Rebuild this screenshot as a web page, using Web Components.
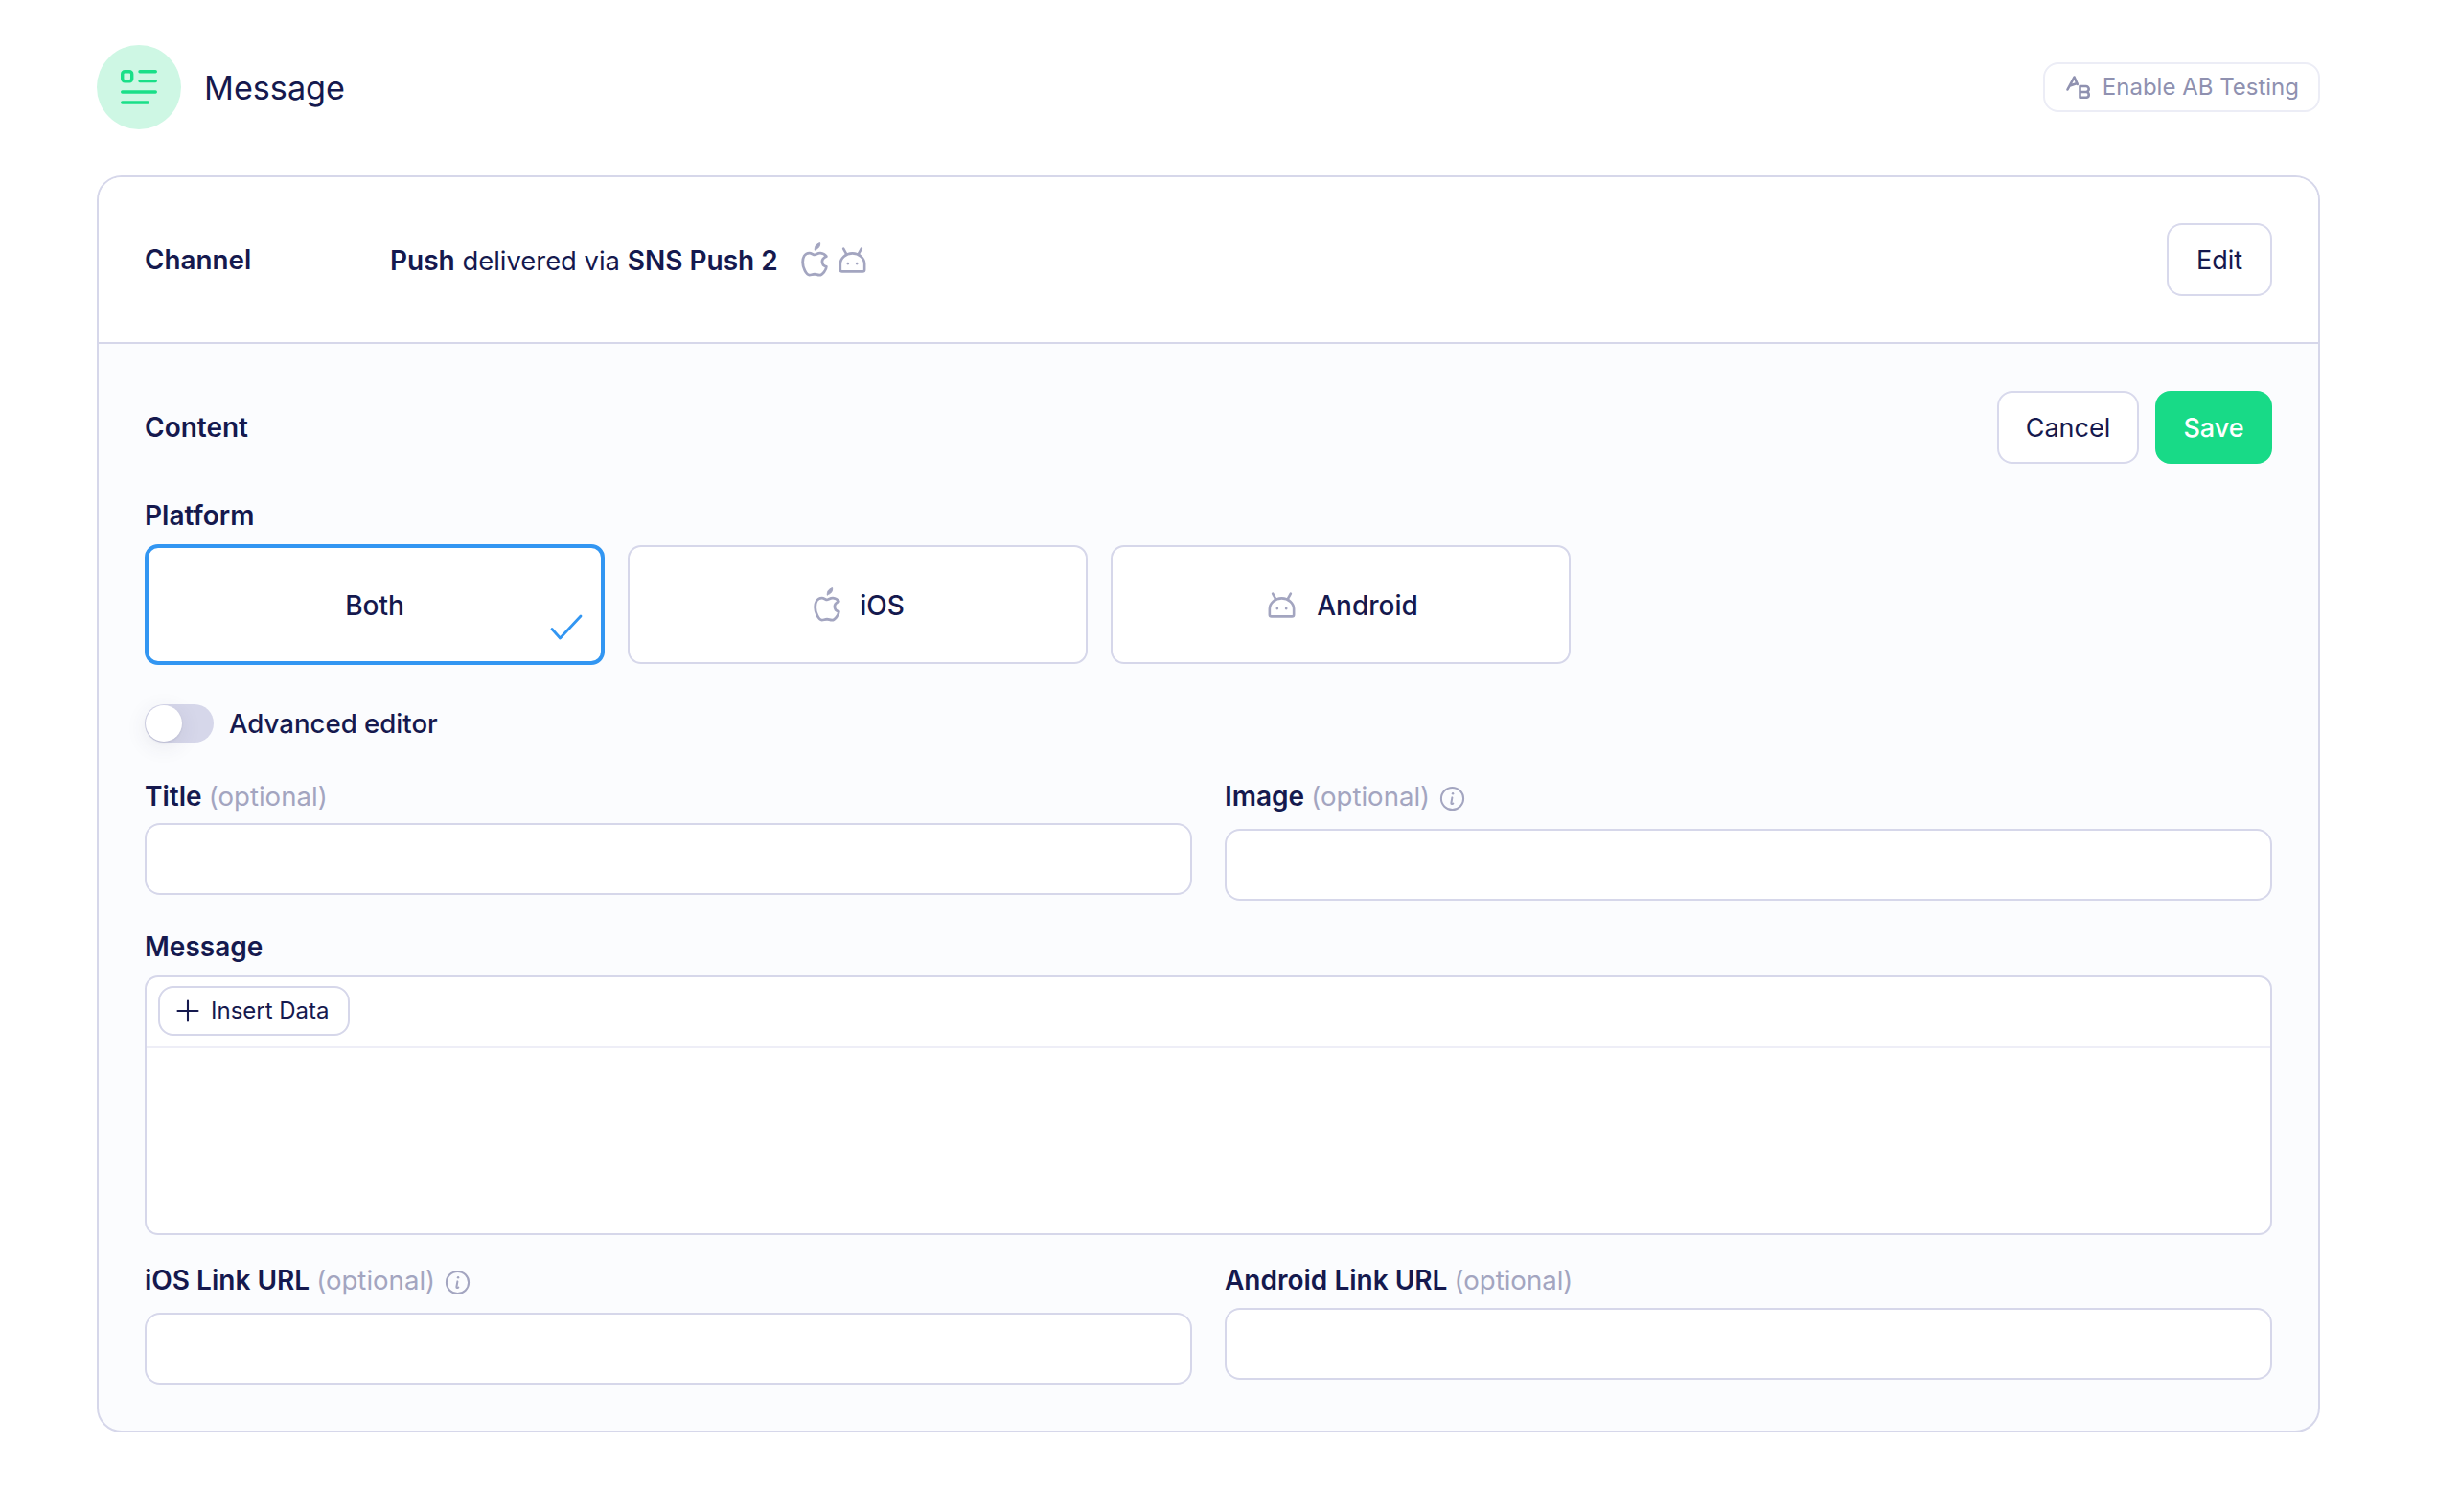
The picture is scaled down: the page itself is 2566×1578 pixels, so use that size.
<!DOCTYPE html>
<html lang="en"><head><meta charset="utf-8"><title>Message</title>
<style>
html,body{margin:0;padding:0;background:#fff}
body{font-family:Inter,"Liberation Sans",sans-serif;color:#15194e;-webkit-font-smoothing:antialiased}
</style></head><body>
<message-page></message-page>
<script>
const ICONS={
 apple:`<svg viewBox="3 1 17 21" fill="none" stroke="currentColor" stroke-width="1.7" stroke-linecap="round" stroke-linejoin="round"><path d="M8.286 7.008c-3.216 0-4.286 3.23-4.286 5.92 0 3.229 2.143 8.072 4.286 8.072 1.165-.05 1.799-.538 3.214-.538 1.406 0 1.607.538 3.214.538s4.286-3.229 4.286-5.381c-.03-.011-2.649-.434-2.679-3.23-.02-2.335 2.589-3.179 2.679-3.228-1.096-1.606-3.162-2.113-3.75-2.153-1.535-.12-3.032 1.077-3.75 1.077-.729 0-2.036-1.077-3.214-1.077z"/><path fill="currentColor" stroke-width=".6" d="M11.700 5c-.3-2.100 1-3.700 3.200-4.400.3 2.200-1 3.900-3.200 4.400z"/></svg>`,
 android:`<svg viewBox="0 0 24 24" fill="none" stroke="currentColor" stroke-width="1.9" stroke-linecap="round" stroke-linejoin="round"><path d="M2.800 19.200V15a9.200 8.200 0 0 1 18.400 0v4.200a1.400 1.400 0 0 1-1.400 1.400H4.200a1.400 1.400 0 0 1-1.400-1.400z"/><path d="M5.200 3.400l2.200 4M18.800 3.400l-2.200 4"/><circle cx="8.600" cy="14.600" r="1" fill="currentColor" stroke="none"/><circle cx="15.400" cy="14.600" r="1" fill="currentColor" stroke="none"/></svg>`,
 info:`<svg viewBox="0 0 24 24" fill="none" stroke="currentColor" stroke-width="1.8" stroke-linecap="round" stroke-linejoin="round"><circle cx="12" cy="12" r="10.300"/><path d="M11.900 11l-.9 5.200c-.1.700.5 1 1.700.3"/><circle cx="12.500" cy="7.400" r="1.100" fill="currentColor" stroke="none"/></svg>`,
 list:`<svg viewBox="0 0 38 36" fill="none" stroke="currentColor" stroke-width="3.400" stroke-linecap="round" stroke-linejoin="round"><rect x="1.700" y="1.700" width="10" height="10" rx="2.500"/><path d="M20 1.800h16.300M20 11.600h16.300M1.700 23h34.600M1.700 34h26.600"/></svg>`,
 ab:`<svg viewBox="0 0 26 24" fill="none" stroke="currentColor" stroke-width="2.600" stroke-linecap="round" stroke-linejoin="round"><path d="M1.500 14.500L8.500 1.500l3.300 7.500M4 10.500l7.500-2.500"/><path d="M14.500 11h6.200a3 3 0 0 1 0 6h-6.200zM14.500 17h7a3 3 0 0 1 0 5.800h-7z"/></svg>`,
 plus:`<svg viewBox="0 0 24 24" fill="none" stroke="currentColor" stroke-width="2.100" stroke-linecap="round"><path d="M12 1.500v21M1.500 12h21"/></svg>`,
 check:`<svg viewBox="0 0 34 28" fill="none" stroke="currentColor" stroke-width="2.800" stroke-linecap="round" stroke-linejoin="round"><path d="M2 15.500L10.500 25 32 2"/></svg>`
};
function def(name,css,html){
 customElements.define(name,class extends HTMLElement{
  constructor(){super();const s=this.attachShadow({mode:'open'});
   s.innerHTML=`<style>${css}</style>${html}`;}
 });
}
customElements.define('ui-icon',class extends HTMLElement{
 connectedCallback(){
  if(this.shadowRoot)return;
  const s=this.attachShadow({mode:'open'});
  s.innerHTML=`<style>:host{display:inline-flex;flex:none;width:var(--w,28px);height:var(--h,var(--w,28px));color:var(--c,#a3a5c0)}svg{width:100%;height:100%;display:block;overflow:visible}</style>${ICONS[this.getAttribute('name')]}`;
 }
});
def('ui-button',`:host{display:inline-flex;box-sizing:border-box;height:76px;align-items:center;justify-content:center;border:2px solid #d8d9ec;border-radius:16px;background:#fff;font:400 27px/1 Inter,"Liberation Sans",sans-serif;color:#15194e}
:host([primary]){background:#18da87;border-color:#18da87;color:#fff;font-weight:500}`,`<slot></slot>`);
def('pill-button',`:host{display:inline-flex;box-sizing:border-box;align-items:center;height:var(--ph,52px);padding:var(--pp,0 20px 0 22px);gap:var(--pg,12px);border:2px solid var(--pb,#ecedf6);border-radius:16px;background:#fff;font:400 24px/1 Inter,"Liberation Sans",sans-serif;color:var(--pc,#8f91b0)}`,`<slot></slot>`);
def('section-row',`:host{display:flex;align-items:center;justify-content:space-between}`,`<slot></slot>`);
def('platform-tile',`:host{box-sizing:border-box;position:relative;display:flex;align-items:center;justify-content:center;gap:20px;height:124px;padding:2px 0 0 3px;background:#fff;border:2px solid #d6d7ea;border-radius:14px;font:500 28px/1 Inter,"Liberation Sans",sans-serif;color:#15194e;margin:1px 0}
::slotted(ui-icon){margin-top:-2px}
:host([selected]){height:126px;margin:0;padding-left:0;border:4px solid #3296f2}
.c{position:absolute;right:19px;bottom:21px;--w:34px;--h:28px;--c:#3296f2;display:none}
:host([selected]) .c{display:inline-flex}`,`<slot></slot><ui-icon class="c" name="check"></ui-icon>`);
def('toggle-switch',`:host{display:flex;align-items:center;gap:16px;font:500 27.6px/1 Inter,"Liberation Sans",sans-serif;color:#15194e}
.t{position:relative;width:72px;height:40px;border-radius:20px;background:#d6d7ea;flex:none}
.k{position:absolute;left:1px;top:1px;width:38px;height:38px;border-radius:50%;background:#fff;box-shadow:0 5px 22px rgba(60,60,90,.10),0 1px 2px rgba(60,60,90,.12)}
.l{padding-top:2px}`,`<div class="t"><div class="k"></div></div><span class="l"><slot></slot></span>`);
def('field-label',`:host{display:flex;align-items:flex-start;gap:9px;height:34px;font:600 28px/34px Inter,"Liberation Sans",sans-serif;color:#15194e}
:host([tall]){padding-bottom:6px}
.o{font-weight:400;font-size:27.6px;color:#a3a5c0}
::slotted(ui-icon){margin:6px 0 0 1px;--w:27px}`,`<span><slot name="t"></slot> <span class="o"><slot name="o"></slot></span></span><slot></slot>`);
def('text-box',`:host{display:block;box-sizing:border-box;height:75px;background:#fff;border:2px solid #d6d7ea;border-radius:16px}`,``);
def('form-field',`:host{display:flex;flex-direction:column;gap:11px}:host([wide]){gap:12px}`,`<slot></slot>`);
def('message-editor',`:host{display:block;box-sizing:border-box;height:271px;background:#fff;border:2px solid #d6d7ea;border-radius:14px;overflow:hidden}
.b{height:74px;box-sizing:border-box;border-bottom:2px solid #eeeef7;padding:9px 0 0 12px}`,`<div class="b"><slot></slot></div>`);
def('form-grid',`:host{display:grid;grid-template-columns:1093px 1093px;column-gap:34px;align-items:start}`,`<slot></slot>`);
def('tile-row',`:host{display:grid;grid-template-columns:repeat(3,480px);column-gap:24px;margin-top:13px;align-items:center}`,`<slot></slot>`);
def('page-header',`:host{display:flex;align-items:center;justify-content:space-between;height:88px;margin-bottom:48px}
.l{display:flex;align-items:center;gap:24px;font:400 34.2px/1 Inter,"Liberation Sans",sans-serif;color:#15194e}
.t{padding-top:2px}
.c{width:88px;height:88px;border-radius:50%;background:#cef7e4;display:flex;align-items:center;justify-content:center;--w:38px;--h:36px;--c:#1adf88}`,
`<div class="l"><div class="c"><ui-icon name="list"></ui-icon></div><span class="t"><slot name="title"></slot></span></div><slot></slot>`);
def('channel-card',`:host{display:block;box-sizing:border-box;border:2px solid #d6d7ea;border-radius:26px;overflow:hidden;background:#fbfcfe}
.h{display:flex;align-items:center;justify-content:space-between;height:174px;box-sizing:border-box;padding:0 48px;background:#fff;border-bottom:2px solid #d6d7ea}
.b{padding:49px 48px 48px}`,`<div class="h"><slot name="head"></slot></div><div class="b"><slot></slot></div>`);
def('channel-info',`:host{display:flex;align-items:center;font:400 27.4px/1 Inter,"Liberation Sans",sans-serif;color:#15194e}
.n{width:256px;font-weight:600;font-size:27.8px;padding-top:2px}.d{flex:none;padding-top:2px}
.i{display:flex;align-items:center;gap:9px;margin-left:24px;--w:33px}
.i ui-icon:first-child{--w:28px;--h:35px}
::slotted(b){font-weight:600;font-size:28px}`,`<span class="n">Channel</span><span class="d"><slot></slot></span><span class="i"><ui-icon name="apple"></ui-icon><ui-icon name="android"></ui-icon></span>`);
def('message-page',`:host{display:block;box-sizing:border-box;width:2566px;height:1578px;padding:47px 145px 0 101px}
.sh{font:600 28px/1 Inter,"Liberation Sans",sans-serif;color:#15194e}
.bs{display:flex;gap:17px}
.cancel{width:148px}.save{width:122px}.edit{width:110px}
.pl{margin-top:37px}
toggle-switch{margin-top:41px}
.g1{margin-top:39px}.g3{margin-top:30px}
.mf{margin-top:31px;display:flex;flex-direction:column;gap:13px}
.pi{--w:33px}
.pa{--w:28px;--h:35px}
.ab{--w:26px;--h:24px;--c:#8f91b0}
.ins{--ph:52px;--pp:0 19px 0 17px;--pg:12px;--pb:#d6d7ea;--pc:#15194e}
.ins ui-icon{--w:24px;--c:#15194e}`,
`<page-header><span slot="title">Message</span><pill-button><ui-icon class="ab" name="ab"></ui-icon>Enable AB Testing</pill-button></page-header>
<channel-card>
 <channel-info slot="head"><b>Push</b> delivered via <b>SNS Push 2</b></channel-info>
 <ui-button slot="head" class="edit">Edit</ui-button>
 <section-row><span class="sh">Content</span><div class="bs"><ui-button class="cancel">Cancel</ui-button><ui-button class="save" primary>Save</ui-button></div></section-row>
 <field-label class="pl"><span slot="t">Platform</span></field-label>
 <tile-row>
  <platform-tile selected>Both</platform-tile>
  <platform-tile><ui-icon class="pa" name="apple"></ui-icon>iOS</platform-tile>
  <platform-tile><ui-icon class="pi" name="android"></ui-icon>Android</platform-tile>
 </tile-row>
 <toggle-switch>Advanced editor</toggle-switch>
 <form-grid class="g1">
  <form-field><field-label><span slot="t">Title</span><span slot="o">(optional)</span></field-label><text-box></text-box></form-field>
  <form-field><field-label tall><span slot="t">Image</span><span slot="o">(optional)</span><ui-icon name="info"></ui-icon></field-label><text-box></text-box></form-field>
 </form-grid>
 <div class="mf"><field-label><span slot="t">Message</span></field-label>
  <message-editor><pill-button class="ins"><ui-icon name="plus"></ui-icon>Insert Data</pill-button></message-editor></div>
 <form-grid class="g3">
  <form-field><field-label tall><span slot="t">iOS Link URL</span><span slot="o">(optional)</span><ui-icon name="info"></ui-icon></field-label><text-box></text-box></form-field>
  <form-field wide><field-label><span slot="t">Android Link URL</span><span slot="o">(optional)</span></field-label><text-box></text-box></form-field>
 </form-grid>
</channel-card>`);
</script>
</body></html>
